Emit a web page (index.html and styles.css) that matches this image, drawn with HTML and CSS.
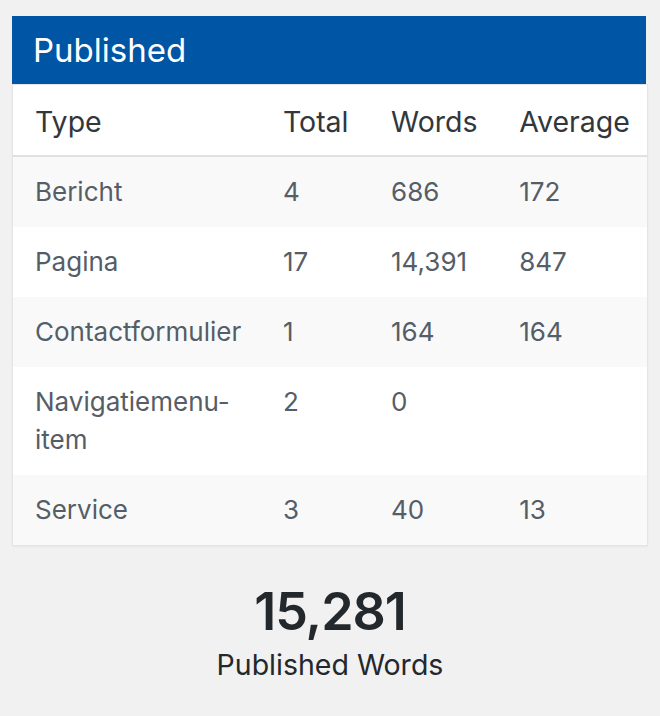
FILE: index.html
```html
<!DOCTYPE html>
<html lang="en">
<head>
<meta charset="utf-8">
<title>Published</title>
<link rel="stylesheet" href="styles.css">
</head>
<body>
<div class="widget">
  <h2 class="widget-title">Published</h2>
  <table class="stats">
    <colgroup>
      <col class="c-type">
      <col class="c-total">
      <col class="c-words">
      <col class="c-avg">
    </colgroup>
    <thead>
      <tr><th>Type</th><th>Total</th><th>Words</th><th>Average</th></tr>
    </thead>
    <tbody>
      <tr><td>Bericht</td><td>4</td><td>686</td><td>172</td></tr>
      <tr><td>Pagina</td><td>17</td><td>14,391</td><td>847</td></tr>
      <tr><td>Contactformulier</td><td>1</td><td>164</td><td>164</td></tr>
      <tr><td>Navigatiemenu-<br>item</td><td>2</td><td>0</td><td></td></tr>
      <tr><td>Service</td><td>3</td><td>40</td><td>13</td></tr>
    </tbody>
  </table>
  <div class="summary">
    <div class="summary-num">15,281</div>
    <div class="summary-label">Published Words</div>
  </div>
</div>
</body>
</html>
```
FILE: styles.css
```css
html, body {
  margin: 0;
  padding: 0;
  background: #f1f1f1;
}
body {
  font-family: Inter, "Noto Sans", sans-serif;
  color: #32373c;
}
.widget {
  padding: 16px 12px;
}
.widget-title {
  margin: 0;
  width: 634px;
  box-sizing: border-box;
  background: #0055a5;
  color: #ffffff;
  font-size: 33px;
  font-weight: 400;
  line-height: 40px;
  padding: 14px 21px;
}
.stats {
  width: 636px;
  border-collapse: collapse;
  background: #ffffff;
  border: 1px solid #e5e5e5;
  box-shadow: 0 1px 2px rgba(0,0,0,0.05);
  table-layout: fixed;
}
.c-type { width: 248px; }
.c-total { width: 108px; }
.c-words { width: 128px; }
.c-avg { width: 150px; }
.stats th,
.stats td {
  text-align: left;
  vertical-align: top;
  font-size: 26px;
  line-height: 38px;
  padding: 16px 22px;
  white-space: nowrap;
}
.stats th {
  font-size: 28.5px;
  font-weight: 400;
  color: #32373c;
  padding: 18px 22px 14px;
  border-bottom: 2px solid #e1e1e1;
}
.stats td {
  color: #555d66;
}
.stats tbody tr:nth-child(odd) {
  background: #f9f9f9;
}
.summary {
  text-align: center;
  width: 636px;
  margin-top: 36px;
}
.summary-num {
  font-size: 52px;
  line-height: 60px;
  font-weight: 600;
  letter-spacing: -1px;
  color: #23282d;
}
.summary-label {
  margin-top: 6px;
  font-size: 28.5px;
  line-height: 34px;
  color: #23282d;
}
```
